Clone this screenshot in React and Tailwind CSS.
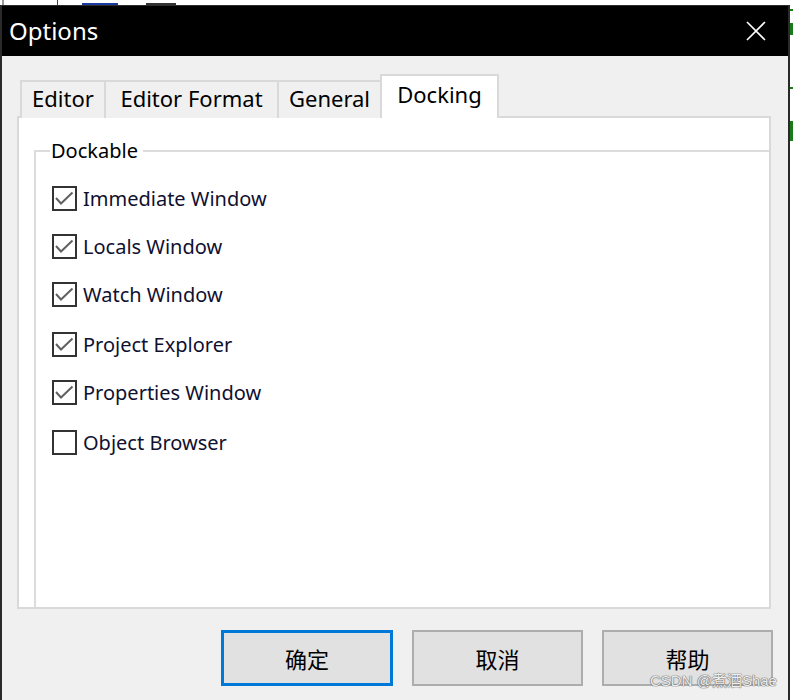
import React from 'react'

const font = { fontFamily: '"Noto Sans", "Liberation Sans", sans-serif' }

const tabs = [
  { label: 'Editor', w: 'w-[86px]' },
  { label: 'Editor Format', w: 'w-[175px]' },
  { label: 'General', w: 'w-[105px]' },
]

const items = [
  { label: 'Immediate Window', checked: true, mt: 'mt-0' },
  { label: 'Locals Window', checked: true, mt: 'mt-[23px]' },
  { label: 'Watch Window', checked: true, mt: 'mt-[23px]' },
  { label: 'Project Explorer', checked: true, mt: 'mt-[25px]' },
  { label: 'Properties Window', checked: true, mt: 'mt-[23px]' },
  { label: 'Object Browser', checked: false, mt: 'mt-[25px]' },
]

function Checkbox({ checked }) {
  return (
    <div className="w-[25px] h-[25px] border-2 border-[#333333] bg-white shrink-0">
      {checked && (
        <svg width="21" height="21" viewBox="0 0 21 21">
          <polyline points="2,10 7,15.5 18.5,4.5" fill="none" stroke="#606060" strokeWidth="2" />
        </svg>
      )}
    </div>
  )
}

function Button({ children, primary }) {
  return (
    <button
      className={
        primary
          ? 'w-[172px] h-[56px] bg-[#e1e1e1] border-[3px] border-[#0078d7] text-[22px] text-black'
          : 'w-[171px] h-[56px] bg-[#e1e1e1] border-2 border-[#adadad] text-[22px] text-black'
      }
      style={{ fontFamily: '"Noto Sans CJK SC", "Noto Sans", sans-serif' }}
    >
      {children}
    </button>
  )
}

export default function App() {
  return (
    <div className="w-[794px] h-[700px] bg-white overflow-hidden relative flex flex-col" style={font}>
      {/* behind the dialog */}
      <div className="h-[5px] flex items-end shrink-0">
        <div className="ml-[2px] w-[2px] h-full bg-[#9a9a9a]" />
        <div className="ml-[53px] w-px h-full bg-[#444]" />
        <div className="ml-[24px] w-[36px] h-[2px] bg-[#1a3aa0]" />
        <div className="ml-[28px] w-[30px] h-[2px] bg-[#333]" />
      </div>

      <div className="flex flex-1 min-h-0">
        {/* dialog */}
        <div className="w-[790px] h-full flex flex-col border-l-2 border-r-2 border-t border-[#2a2a2a] bg-[#f0f0f0]">
          <div className="h-[50px] bg-black flex items-center justify-between pl-[7px] pr-[22px] shrink-0">
            <span className="text-white text-[24px] leading-none">Options</span>
            <svg width="20" height="20" viewBox="0 0 20 20">
              <path d="M1 1 L19 19 M19 1 L1 19" stroke="#ffffff" strokeWidth="1.6" />
            </svg>
          </div>

          <div className="flex-1 pt-[18px] pl-[15px] pr-[17px] flex flex-col">
            {/* tab strip */}
            <div className="flex items-end h-[44px] pl-[3px] -mb-[2px] relative z-10">
              {tabs.map((t) => (
                <div
                  key={t.label}
                  className={`${t.w} h-[38px] border-2 border-b-0 border-[#d9d9d9] -ml-[2px] first:ml-0 bg-[#f0f0f0] flex items-center justify-center pb-[4px] text-[22px] text-black leading-none`}
                >
                  {t.label}
                </div>
              ))}
              <div className="w-[119px] h-[44px] border-2 border-b-0 border-[#d9d9d9] -ml-[2px] bg-white flex items-start justify-center pt-[7px] text-[22px] text-black leading-none">
                Docking
              </div>
            </div>

            {/* panel */}
            <div className="h-[493px] bg-white border-2 border-[#d9d9d9] pt-[21px] pl-[15px] overflow-hidden">
              <fieldset className="border-l-2 border-t-2 border-r-0 border-b-0 border-[#dcdcdc] h-[500px] pl-[16px] pt-[23px]">
                <legend className="-ml-[2px] pl-[1px] pr-[5px] text-[20px] leading-[24px] text-black">Dockable</legend>
                <div className="flex flex-col">
                  {items.map((it) => (
                    <label key={it.label} className={`${it.mt} flex items-center h-[25px] gap-[6px]`}>
                      <Checkbox checked={it.checked} />
                      <span className="text-[20px] leading-none text-[#101030]">{it.label}</span>
                    </label>
                  ))}
                </div>
              </fieldset>
            </div>

            <div className="flex justify-end gap-[19px] mt-[21px] -mr-[2px]">
              <Button primary>确定</Button>
              <Button>取消</Button>
              <Button>帮助</Button>
            </div>
          </div>
        </div>

        {/* strip to the right */}
        <div className="flex-1 flex flex-col gap-[12px] pt-[4px]">
          <div className="w-[3px] h-[2px] bg-[#1a7a1a]" />
          <div className="w-[3px] h-[12px] bg-[#1a7a1a]" />
          <div className="w-[3px] h-[2px] bg-[#1a7a1a] mt-[40px]" />
          <div className="w-[3px] h-[20px] bg-[#1a7a1a] mt-[20px]" />
        </div>
      </div>

      <div
        className="absolute left-[650px] top-[673px] text-[15px] leading-none text-[#eeeeee] [text-shadow:0_0_1px_#666,0_0_1px_#666,0_0_1px_#666]"
        style={{ fontFamily: '"Liberation Sans", "Noto Sans CJK SC", sans-serif' }}
      >
        CSDN @煮酒Shae
      </div>
    </div>
  )
}
